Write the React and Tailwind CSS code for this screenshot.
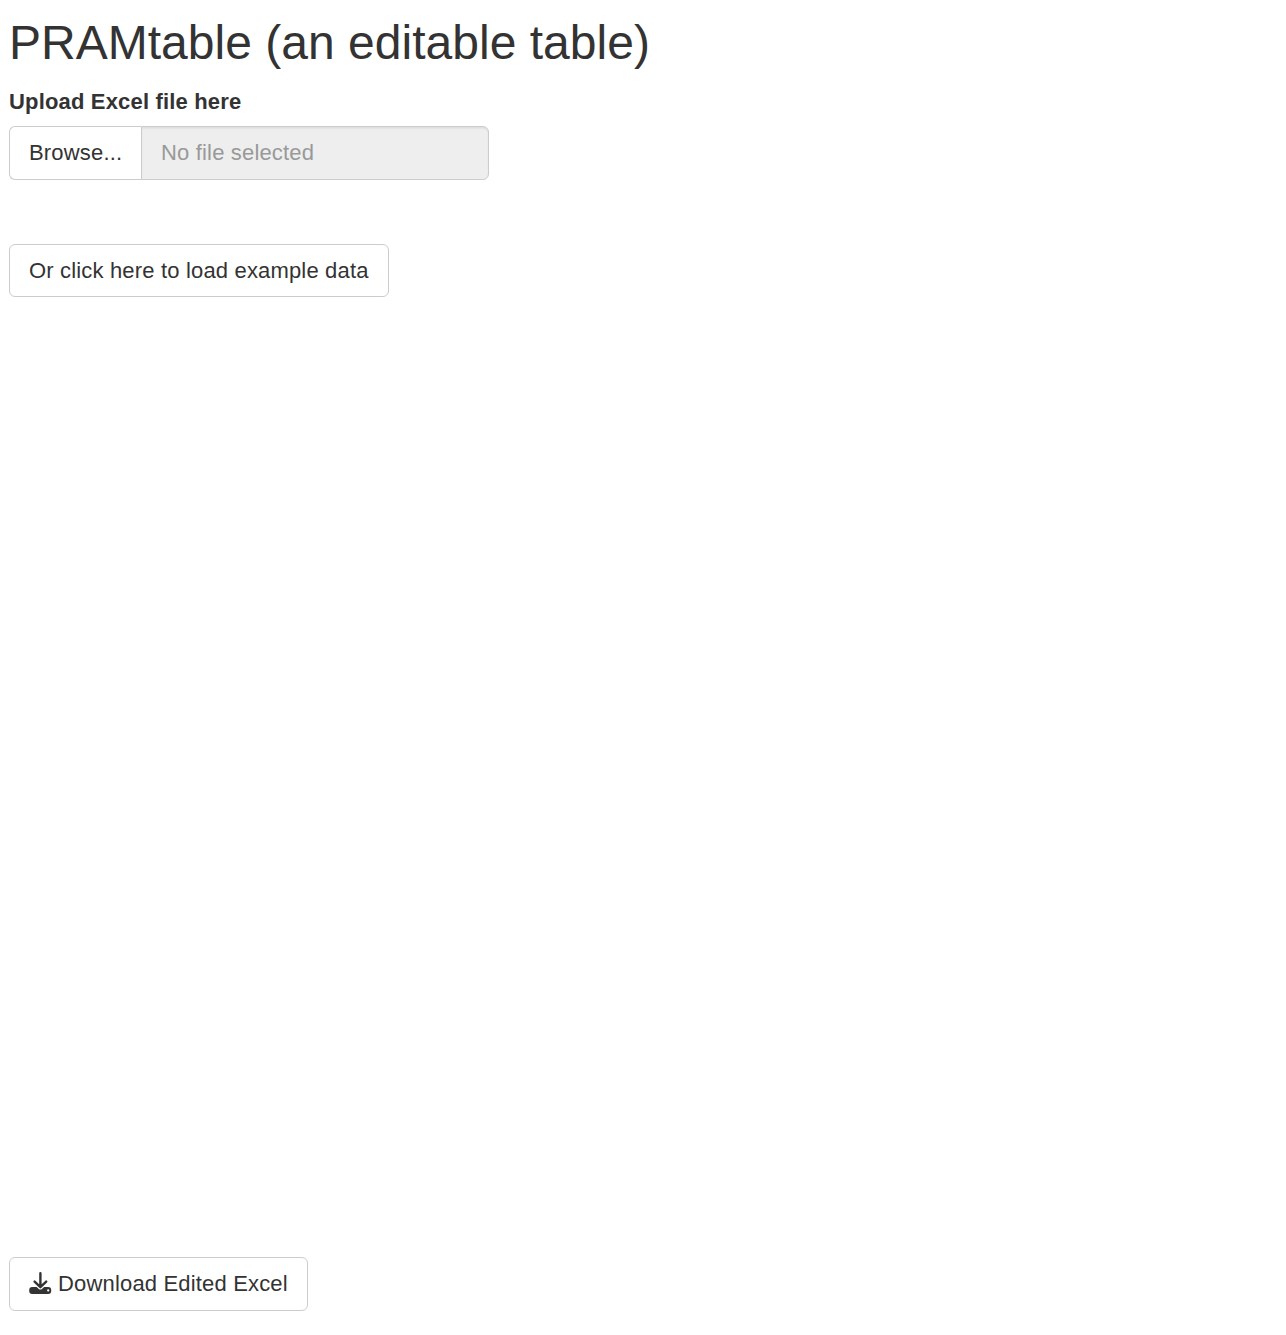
const button =
  "flex items-center border border-[#cccccc] bg-white text-[22px] leading-[31px] tracking-[0.17px] whitespace-nowrap text-[#333333]";

function DownloadIcon() {
  return (
    <svg viewBox="0 0 23 22" className="mr-1.5 h-[22px] w-[23px]" fill="none" aria-hidden="true">
      <rect x="0.2" y="15" width="22" height="7" rx="3" fill="currentColor" />
      <path d="M6 10.2l5.4 5 5.4-5" stroke="white" strokeWidth="4.6" strokeLinecap="round" strokeLinejoin="round" />
      <path d="M11.4 1.3v13.2M5.6 9.6l5.8 5.6 5.8-5.6" stroke="currentColor" strokeWidth="2.4" strokeLinecap="round" strokeLinejoin="round" />
      <circle cx="19.2" cy="18.4" r="1.1" fill="white" />
    </svg>
  );
}

export default function App() {
  return (
    <main className="flex h-[1335px] flex-col items-start bg-white px-[9px] pt-4 pb-6 font-['Liberation_Sans',Arial,sans-serif] text-[#333333]">
      <h1 className="text-[48px] leading-[54px] font-normal tracking-[0.02px] whitespace-nowrap">PRAMtable (an editable table)</h1>
      <label htmlFor="file-name" className="mt-4 text-[22px] leading-[31px] font-bold tracking-[0.17px] whitespace-nowrap">
        Upload Excel file here
      </label>
      <div className="mt-[9px] flex h-[54px] w-[480px]">
        <button className={`${button} w-[132px] rounded-l-[6px] border-r-0 pb-0.5 pl-[19px]`}>Browse...</button>
        <input
          id="file-name"
          readOnly
          placeholder="No file selected"
          className="min-w-0 flex-1 rounded-r-[6px] border border-[#cccccc] bg-[#eeeeee] px-[19px] pb-0.5 text-[22px] tracking-[0.17px] shadow-[inset_0_1.5px_1.5px_rgba(0,0,0,0.075)] placeholder:text-[#999999]"
        />
      </div>
      <button className={`${button} mt-16 h-[53px] w-[380px] rounded-[6px] pl-[19px]`}>
        Or click here to load example data
      </button>
      <button className={`${button} mt-auto h-[54px] w-[299px] rounded-[6px] pb-0.5 pl-[19px]`}>
        <DownloadIcon />
        Download Edited Excel
      </button>
    </main>
  );
}
